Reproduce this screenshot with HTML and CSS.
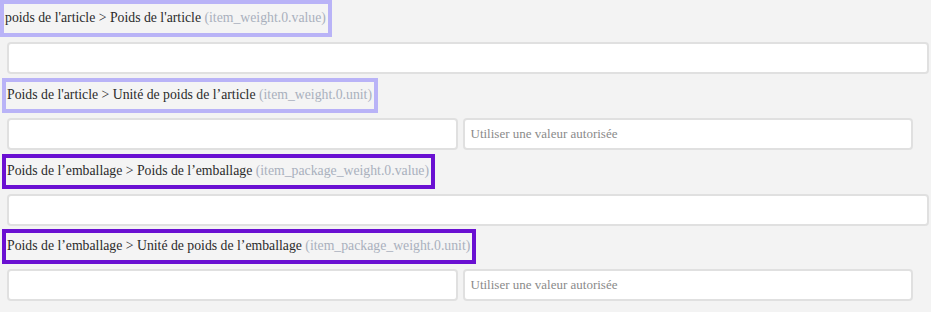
FILE: index.html
```html
<!DOCTYPE html>
<html lang="fr">
<head>
  <meta charset="UTF-8">
  <meta name="viewport" content="width=device-width, initial-scale=1.0">
  <title>Champs de poids</title>
  <link rel="stylesheet" href="styles.css">
</head>
<body>

  <div class="form">

    <!-- poids de l'article -->
    <div class="field field-first">
      <span class="label label-soft">poids de l'article &gt; Poids de l'article <span class="key">(item_weight.0.value)</span></span>
      <div class="inputs">
        <input type="text" class="input input-full">
      </div>
    </div>

    <div class="field">
      <span class="label label-soft">Poids de l'article &gt; Unité de poids de l’article <span class="key">(item_weight.0.unit)</span></span>
      <div class="inputs inputs-split">
        <input type="text" class="input">
        <input type="text" class="input" placeholder="Utiliser une valeur autorisée">
      </div>
    </div>

    <!-- poids de l'emballage -->
    <div class="field">
      <span class="label label-strong">Poids de l’emballage &gt; Poids de l’emballage <span class="key">(item_package_weight.0.value)</span></span>
      <div class="inputs">
        <input type="text" class="input input-full">
      </div>
    </div>

    <div class="field">
      <span class="label label-strong">Poids de l’emballage &gt; Unité de poids de l’emballage <span class="key">(item_package_weight.0.unit)</span></span>
      <div class="inputs inputs-split">
        <input type="text" class="input">
        <input type="text" class="input" placeholder="Utiliser une valeur autorisée">
      </div>
    </div>

  </div>

</body>
</html>
```

FILE: styles.css
```css
* { box-sizing: border-box; margin: 0; padding: 0; }

body {
  font-family: "Liberation Serif", "Times New Roman", serif;
  font-size: 13.75px;
  color: #2b2b2b;
  background: #f3f3f3;
}

.form { padding: 0 2px 0 0; }

/* — LABELS ————————————— */
.field { margin-bottom: 4px; }
.field:nth-child(3) { margin-bottom: 3px; }

.label {
  display: inline-block;
  height: 35px;
  line-height: 26px;
  margin-left: 2px;
  padding: 0 2px 0 1px;
  border: 4px solid #b9b3f7;
  background: #f4f4f4;
  white-space: nowrap;
}
.field-first .label { margin-left: 0; height: 37px; line-height: 28px; }

.label-strong { border-color: #6a10d2; }

.key { color: #a9b0bd; }

/* — INPUTS ————————————— */
.inputs {
  display: flex;
  gap: 5px;
  margin: 5px 0 0 7px;
}
.inputs-split { padding-right: 16px; }

.input {
  flex: 1;
  height: 32px;
  padding: 0 6px;
  border: 2px solid #e0e0e0;
  border-radius: 4px;
  background: #fff;
  font-family: inherit;
  font-size: 13px;
  color: #2b2b2b;
  outline: none;
}
.input::placeholder { color: #8a8a8a; }
```
